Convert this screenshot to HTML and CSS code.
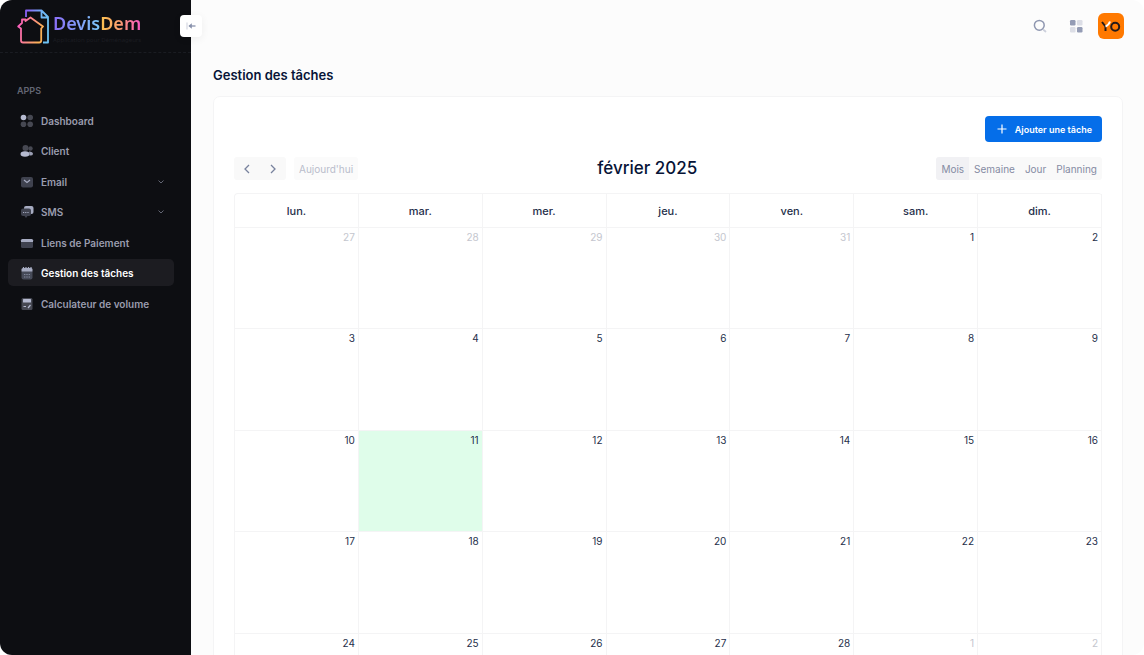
FILE: index.html
```html
<!DOCTYPE html>
<html lang="fr">
<head>
<meta charset="utf-8">
<meta name="viewport" content="width=device-width, initial-scale=1">
<title>DevisDem – Gestion des tâches</title>
<link rel="stylesheet" href="styles.css">
</head>
<body>
<div class="app">
  <aside class="sidebar">
    <div class="brand-row">
      <a class="brand" href="#" aria-label="DevisDem">
        <svg class="brand-mark" viewBox="0 0 34 36" aria-hidden="true">
          <defs>
            <linearGradient id="doc" x1="0" y1="0" x2="1" y2="0.5"><stop offset="0" stop-color="#8b5cf6"/><stop offset="0.6" stop-color="#6fb4f5"/><stop offset="1" stop-color="#6fc3f5"/></linearGradient>
            <linearGradient id="house" x1="0" y1="0" x2="1" y2="0.3"><stop offset="0" stop-color="#f957c6"/><stop offset="1" stop-color="#fbb056"/></linearGradient>
          </defs>
          <path d="M9 8V1.500H24.500L31 8V33.500H26M24.500 2V8.500H31" fill="none" stroke="url(#doc)" stroke-width="1.800" stroke-linejoin="round"/>
          <path d="M1.200 17.500L5 14V10.500H8.500V12L13.500 8.500L26 17.500L24.200 19.500V31.500Q24.200 33.500 22.200 33.500H6Q4 33.500 4 31.500V19.500Z" fill="none" stroke="url(#house)" stroke-width="1.800" stroke-linejoin="round"/>
        </svg>
        <span class="brand-text">
          <span class="brand-name"><span class="brand-cool">Devis</span><span class="brand-warm">Dem</span></span>
          <span class="brand-tag">Application pour Déménageurs</span>
        </span>
      </a>
      <button class="collapse" type="button" aria-label="Réduire le menu">
        <svg viewBox="0 0 10 8" aria-hidden="true"><path d="M1 0.500V7.500" stroke="#d5d8e2" stroke-width="1.200"/><path d="M9.500 4H3.500" stroke="#99a1b7" stroke-width="1.300"/><path d="M5.800 1.300L2.400 4L5.800 6.700Z" fill="#8790ab"/></svg>
      </button>
    </div>
    <nav class="nav" aria-label="Menu principal">
      <h2 class="nav-title">APPS</h2>
      <ul class="nav-list">
        <li><a class="nav-link" href="#">
          <svg class="nav-icon" viewBox="0 0 14 14"><circle cx="3.500" cy="3.500" r="2.800" fill="#b5bad0"/><g fill="#464852"><circle cx="10.200" cy="3.500" r="2.800"/><circle cx="3.500" cy="10.200" r="2.800"/><circle cx="10.200" cy="10.200" r="2.800"/></g></svg>
          <span>Dashboard</span></a></li>
        <li><a class="nav-link" href="#">
          <svg class="nav-icon" viewBox="0 0 14 14"><circle cx="5.500" cy="4" r="3" fill="#464852"/><circle cx="10.500" cy="4.500" r="2.200" fill="#464852"/><path d="M9 7.500Q13 7.500 13 10Q12.500 12 9.500 11.500Z" fill="#9a9eb3"/><ellipse cx="5" cy="10" rx="4.500" ry="2.800" fill="#b5bad0"/></svg>
          <span>Client</span></a></li>
        <li><a class="nav-link" href="#">
          <svg class="nav-icon" viewBox="0 0 14 14"><rect x="1" y="2" width="12" height="10.500" rx="2" fill="#3f424f"/><path d="M4 5L7 7.500L10 5" fill="none" stroke="#a7acc2" stroke-width="1.200"/></svg>
          <span>Email</span>
          <svg class="chevron" viewBox="0 0 8 6"><path d="M1.500 1.500L4 4L6.500 1.500"/></svg></a></li>
        <li><a class="nav-link" href="#">
          <svg class="nav-icon" viewBox="0 0 14 14"><rect x="4" y="1" width="9.500" height="8" rx="2" fill="#a7acc2"/><path d="M3 3.500H9Q11 3.500 11 5.500V9Q11 11 9 11H7.500L6 13L4.500 11H3Q1 11 1 9V5.500Q1 3.500 3 3.500Z" fill="#3f424f"/><path d="M3 7.500H9" stroke="#a7acc2" stroke-dasharray="1.200 1"/></svg>
          <span>SMS</span>
          <svg class="chevron" viewBox="0 0 8 6"><path d="M1.500 1.500L4 4L6.500 1.500"/></svg></a></li>
        <li><a class="nav-link" href="#">
          <svg class="nav-icon" viewBox="0 0 14 14"><rect x="1" y="3" width="12" height="9" rx="1.500" fill="#3f424f"/><path d="M1 4.300Q1.500 3 2.500 3H11.500Q12.500 3 13 4.300V6H1Z" fill="#a7acc2"/></svg>
          <span>Liens de Paiement</span></a></li>
        <li><a class="nav-link active" href="#" aria-current="page">
          <svg class="nav-icon" viewBox="0 0 14 14"><rect x="1.500" y="4" width="11" height="9.500" rx="2" fill="#464a58"/><path d="M1.500 5.500V3.500Q1.500 2 3 2H11Q12.500 2 12.500 3.500V5.500Z" fill="#a7acc2"/><path d="M3.500 1V3M6 1V3M8.500 1V3M11 1V3" stroke="#a7acc2" stroke-width="1.200"/><path d="M4 8.500H10M4 11H10" stroke="#81879b" stroke-width="1.200" stroke-dasharray="1.400 0.900"/></svg>
          <span>Gestion des tâches</span></a></li>
        <li><a class="nav-link" href="#">
          <svg class="nav-icon" viewBox="0 0 14 14"><rect x="1.500" y="1" width="11" height="12" rx="1.500" fill="#464852"/><rect x="3" y="2" width="8" height="3.500" rx="0.500" fill="#b5bad0"/><path d="M3.500 9.500H6M8 11L10.500 8" stroke="#b5bad0" stroke-width="1.200"/></svg>
          <span>Calculateur de volume</span></a></li>
      </ul>
    </nav>
  </aside>

  <div class="content">
    <header class="topbar">
      <button class="icon-btn" type="button" aria-label="Rechercher">
        <svg viewBox="0 0 14 14" aria-hidden="true"><circle cx="6.300" cy="6.300" r="4.900" fill="none" stroke="#8f97b0" stroke-width="1.500"/><path d="M10.700 11L12.500 12.500" stroke="#ccd0dc" stroke-width="1.800" stroke-linecap="round"/></svg>
      </button>
      <button class="icon-btn" type="button" aria-label="Applications">
        <svg viewBox="0 0 14 14" aria-hidden="true"><rect x="1" y="1" width="5.500" height="5.500" rx="1.200" fill="#949cb5"/><rect x="8" y="1" width="5.500" height="5.500" rx="1.200" fill="#dcdee6"/><rect x="1" y="8" width="5.500" height="5.500" rx="1.200" fill="#dcdee6"/><rect x="8" y="8" width="5.500" height="5.500" rx="1.200" fill="#949cb5"/></svg>
      </button>
      <button class="avatar" type="button" aria-label="Compte">
        <svg viewBox="0 0 26 26" aria-hidden="true"><rect width="26" height="26" rx="6" fill="#ff7900"/><path d="M4 9L7.500 13.500V18" fill="none" stroke="#241a1a" stroke-width="2"/><path d="M7.500 13.500Q10.500 12.500 12 8.500" fill="none" stroke="#fff" stroke-width="2"/><circle cx="17.200" cy="13.700" r="4" fill="none" stroke="#241a1a" stroke-width="2"/></svg>
      </button>
    </header>

    <main class="main">
      <h1 class="page-title">Gestion des tâches</h1>
      <section class="card">
        <div class="card-actions">
          <button class="btn-primary" type="button">
            <svg viewBox="0 0 10 10" aria-hidden="true"><path d="M5 0.500V9.500M0.500 5H9.500" stroke="#fff" stroke-width="1.200"/></svg>
            Ajouter une tâche
          </button>
        </div>
        <div class="toolbar">
          <div class="toolbar-side">
            <div class="group">
              <button class="arrow" type="button" aria-label="Mois précédent"><svg viewBox="0 0 6 10" aria-hidden="true"><path d="M5 1L1 5L5 9"/></svg></button>
              <button class="arrow" type="button" aria-label="Mois suivant"><svg viewBox="0 0 6 10" aria-hidden="true"><path d="M1 1L5 5L1 9"/></svg></button>
            </div>
            <button class="group today-btn" type="button" disabled>Aujourd'hui</button>
          </div>
          <h2 class="month">février 2025</h2>
          <div class="group">
            <button class="view selected" type="button" aria-pressed="true">Mois</button>
            <button class="view" type="button">Semaine</button>
            <button class="view" type="button">Jour</button>
            <button class="view" type="button">Planning</button>
          </div>
        </div>
        <table class="calendar">
          <thead>
            <tr><th scope="col">lun.</th><th scope="col">mar.</th><th scope="col">mer.</th><th scope="col">jeu.</th><th scope="col">ven.</th><th scope="col">sam.</th><th scope="col">dim.</th></tr>
          </thead>
          <tbody>
            <tr><td class="other">27</td><td class="other">28</td><td class="other">29</td><td class="other">30</td><td class="other">31</td><td>1</td><td>2</td></tr>
            <tr><td>3</td><td>4</td><td>5</td><td>6</td><td>7</td><td>8</td><td>9</td></tr>
            <tr><td>10</td><td class="today">11</td><td>12</td><td>13</td><td>14</td><td>15</td><td>16</td></tr>
            <tr><td>17</td><td>18</td><td>19</td><td>20</td><td>21</td><td>22</td><td>23</td></tr>
            <tr><td>24</td><td>25</td><td>26</td><td>27</td><td>28</td><td class="other">1</td><td class="other">2</td></tr>
          </tbody>
        </table>
      </section>
    </main>
  </div>
</div>
</body>
</html>
```
FILE: styles.css
```css
* { box-sizing: border-box; }

body {
  margin: 0;
  background: #fff;
  font-family: Inter, "Liberation Sans", sans-serif;
  font-size: 10px;
  color: #252f4a;
}

h1, h2, ul { margin: 0; padding: 0; }
button { border: 0; padding: 0; background: none; font: inherit; color: inherit; cursor: pointer; }
svg { display: block; }

.app {
  display: flex;
  height: 100vh;
  overflow: hidden;
  border-radius: 12px;
  background: #fcfcfc;
}

/* Sidebar */
.sidebar {
  flex: 0 0 191px;
  background: #0d0e12;
}

.brand-row {
  position: relative;
  height: 53px;
  padding: 9px 0 0 17px;
  border-bottom: 1px dashed #1a1c22;
}

.brand { display: flex; gap: 2px; text-decoration: none; }
.brand-mark { width: 34px; height: 36px; }
.brand-text { display: flex; flex-direction: column; }
.brand-name {
  font: 600 18px/28px "Noto Sans", sans-serif;
}
.brand-cool, .brand-warm {
  background: linear-gradient(90deg, #8b6cf8, #7cc8fa);
  background-clip: text;
  -webkit-background-clip: text;
  color: transparent;
}
.brand-warm { background-image: linear-gradient(90deg, #fbc34e, #fb9a72 50%, #f957c6); }
.brand-tag {
  font: 6px/6px "Noto Sans", sans-serif;
  color: #1c1d22;
  white-space: nowrap;
}

.collapse {
  position: absolute;
  top: 15px;
  right: -11px;
  display: grid;
  place-items: center;
  width: 22px;
  height: 22px;
  border-radius: 4px;
  background: #fff;
  box-shadow: 0 2px 8px rgba(0, 0, 0, 0.06);
}
.collapse svg { width: 10px; height: 8px; }

.nav { padding: 31px 17px 0 8px; }
.nav-title {
  padding: 0 9px;
  font-size: 9px;
  font-weight: 600;
  line-height: 14px;
  color: #636674;
}
.nav-list { padding-top: 9px; list-style: none; }
.nav-list li { margin-bottom: 3px; }
.nav-list li:nth-child(2n) { margin-bottom: 4px; }
.nav-link {
  display: flex;
  align-items: center;
  gap: 7px;
  height: 27px;
  padding: 0 9px 0 12px;
  border-radius: 5px;
  font-size: 10px;
  font-weight: 600;
  color: #9a9cae;
  text-decoration: none;
}
.nav-link.active { background: #1c1c21; color: #fff; }
.nav-icon { width: 14px; height: 14px; }
.chevron {
  width: 8px;
  height: 6px;
  margin-left: auto;
  fill: none;
  stroke: #636674;
}

/* Content */
.content { flex: 1; min-width: 0; }

.topbar {
  display: flex;
  justify-content: flex-end;
  align-items: center;
  gap: 22px;
  height: 52px;
  padding: 0 20px;
}
.icon-btn svg { width: 14px; height: 14px; }
.avatar { margin-left: -7px; }
.avatar svg { width: 26px; height: 26px; }

.main { padding: 13px 21px 0 22px; }
.page-title {
  font-size: 13px;
  font-weight: 600;
  line-height: 20px;
  color: #071437;
}

.card {
  margin-top: 11px;
  padding: 19px 20px 24px;
  border: 1px solid #f4f4f5;
  border-radius: 7px;
  background: #fff;
}
.card-actions { display: flex; justify-content: flex-end; }
.btn-primary {
  display: flex;
  align-items: center;
  gap: 8px;
  height: 26px;
  padding: 0 10px 0 12px;
  border-radius: 4px;
  background: #056ee9;
  font-size: 9px;
  font-weight: 600;
  color: #fff;
}
.btn-primary svg { width: 10px; height: 10px; }

.toolbar {
  display: flex;
  align-items: center;
  justify-content: space-between;
  padding: 15px 0 13px;
}
.toolbar-side { display: flex; gap: 8px; }
.group {
  display: flex;
  align-items: center;
  height: 23px;
  border-radius: 3px;
  background: #f9f9f9;
  overflow: hidden;
}
.arrow { display: grid; place-items: center; width: 26px; height: 23px; }
.arrow svg {
  width: 6px;
  height: 10px;
  fill: none;
  stroke: #78829d;
  stroke-width: 1.3;
}
.today-btn { padding: 0 5px; background: #fbfbfb; color: #b9bdcb; }
.view { height: 23px; padding: 0 5px; color: #858ba3; }
.view.selected { background: #f1f1f4; }
.month {
  font-size: 17px;
  font-weight: 500;
  line-height: 23px;
  color: #071437;
}

.calendar {
  width: 100%;
  table-layout: fixed;
  border-collapse: separate;
  border-spacing: 0;
  border: solid #f4f4f5;
  border-width: 1px 0 0 1px;
  border-radius: 4px 4px 0 0;
}
.calendar th, .calendar td {
  border: solid #f4f4f5;
  border-width: 0 1px 1px 0;
}
.calendar th {
  height: 34px;
  padding: 0;
  font-size: 11px;
  font-weight: 500;
}
.calendar td {
  height: 101px;
  padding: 3px 3px;
  font-size: 10px;
  line-height: 13px;
  text-align: right;
  vertical-align: top;
}
.calendar tr:nth-child(2n) td { height: 102px; }
.calendar .other { color: #c4c6ce; }
.calendar .today { background: #dffdea; }
```
